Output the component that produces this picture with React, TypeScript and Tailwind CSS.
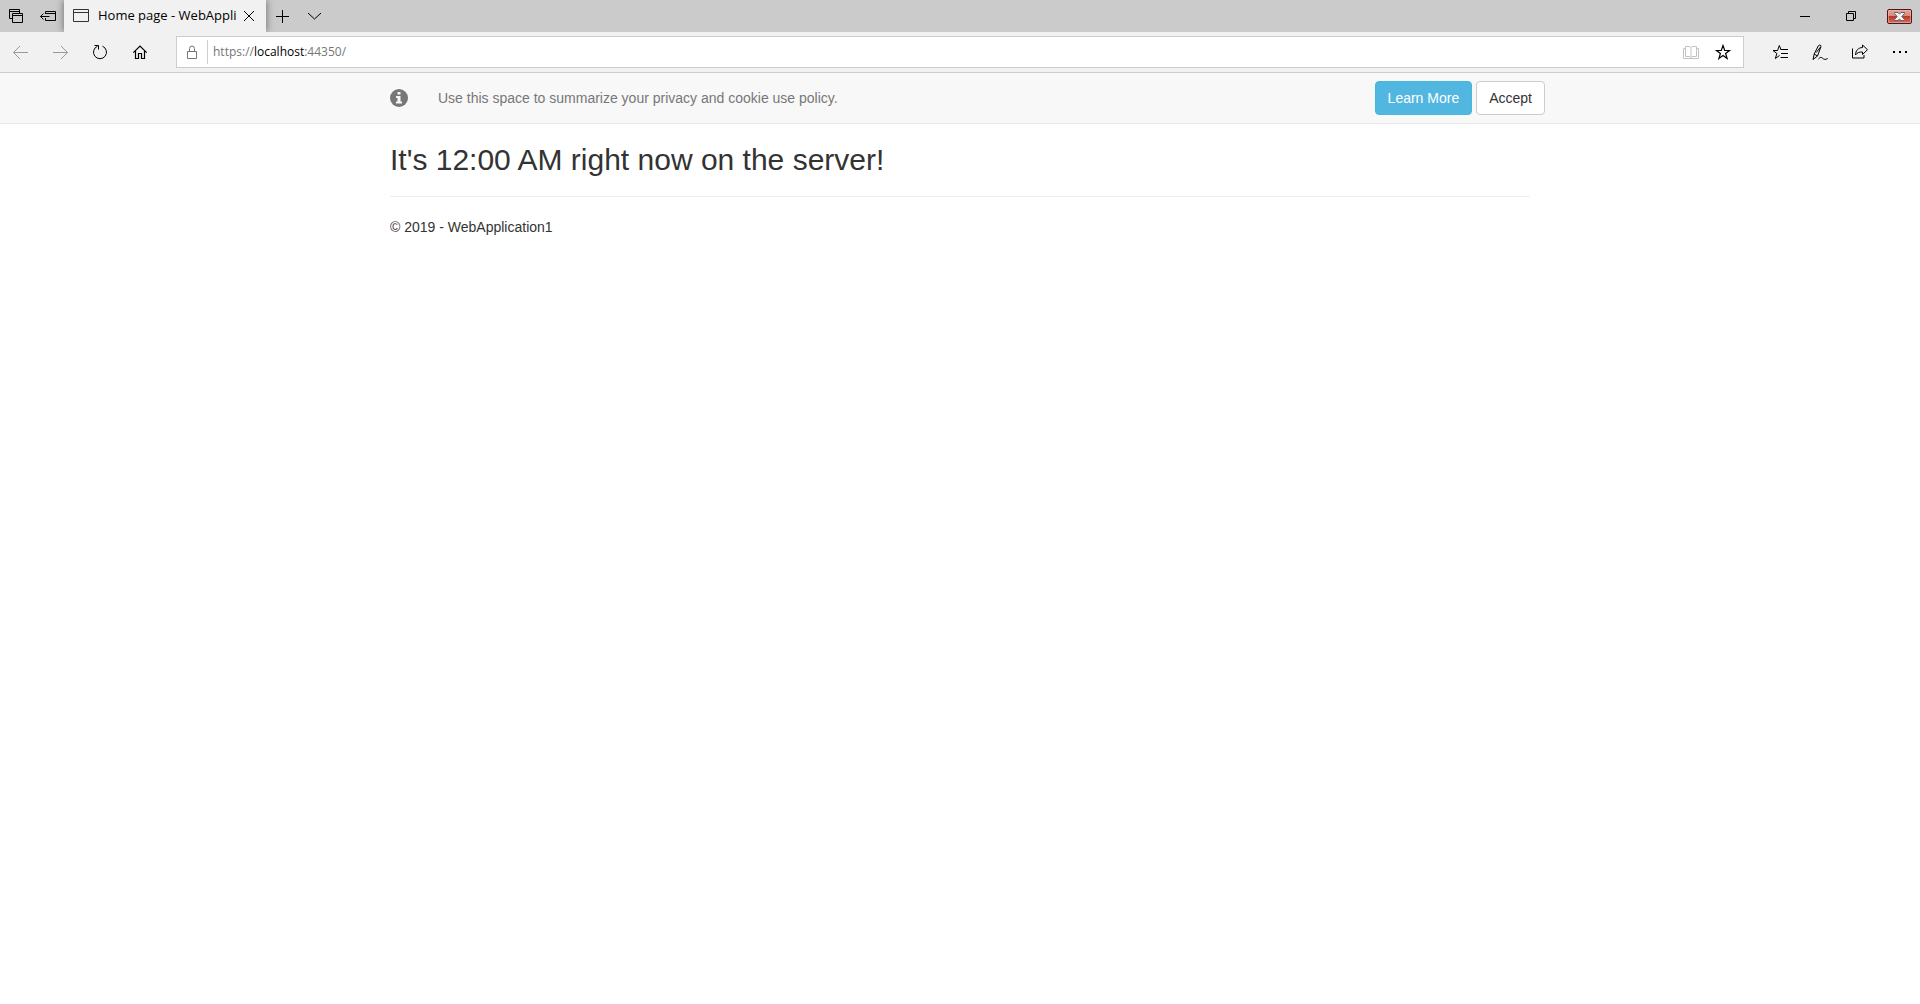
import { useState, type ReactNode } from "react";

function Icon({ children, className = "" }: { children: ReactNode; className?: string }) {
  return (
    <svg
      aria-hidden="true"
      viewBox="0 0 16 16"
      className={`h-4 w-4 shrink-0 overflow-visible ${className}`}
      fill="none"
      stroke="currentColor"
      strokeWidth="1"
    >
      {children}
    </svg>
  );
}

function BarButton({ label, width = "w-10", children }: { label: string; width?: string; children: ReactNode }) {
  return (
    <button type="button" aria-label={label} className={`flex h-full shrink-0 items-center justify-center ${width}`}>
      {children}
    </button>
  );
}

function TabStrip() {
  return (
    <div className="flex h-8 items-stretch overflow-hidden bg-[#cbcbcb] text-black">
      <BarButton label="Tabs you've set aside" width="w-8">
        <Icon>
          <path d="M4 10.5H1.5v-9h10V5M1.5 3.5h10M4.500 5.500h10v9h-10zM4.500 7.500h10" />
        </Icon>
      </BarButton>
      <BarButton label="Set these tabs aside" width="w-8">
        <Icon>
          <path d="M5.500 6V3.500h10v9h-10V10M5.500 5.500h10M.500 8.500h9M3.500 5.500l-3 3 3 3" />
        </Icon>
      </BarButton>
      <div className="relative flex w-[202px] shrink-0 items-center bg-[#f1f1f1] pl-2 shadow-[0_0_8px_rgba(0,0,0,0.5)]">
        <Icon className="text-[#333]">
          <path d="M1.500 1.500h15v12h-15zM1.500 4.500h15" />
        </Icon>
        <span className="ml-[10px] whitespace-nowrap text-[13px]">Home page - WebAppli</span>
        <button type="button" aria-label="Close tab" className="ml-auto mr-[9px] flex h-full items-center">
          <Icon>
            <path d="m3 3 10 10M13 3 3 13" />
          </Icon>
        </button>
      </div>
      <BarButton label="New tab" width="w-8">
        <Icon>
          <path d="M8.500 2v13M2 8.500h13" />
        </Icon>
      </BarButton>
      <BarButton label="Show tab previews" width="w-8">
        <Icon>
          <path d="m2 5 6.500 6L15 5" />
        </Icon>
      </BarButton>
      <div className="ml-auto flex">
        <BarButton label="Minimize" width="w-12">
          <Icon>
            <path d="M3 8.500h10" />
          </Icon>
        </BarButton>
        <BarButton label="Restore" width="w-11">
          <Icon>
            <path d="M3.500 5.500h7v7h-7zM5.500 5.500v-2h7v7h-2" />
          </Icon>
        </BarButton>
        <button type="button" aria-label="Close window" className="ml-[14px] mr-2 flex items-center">
          <svg aria-hidden="true" viewBox="0 0 25 15" className="h-[15px] w-[25px]">
            <defs>
              <linearGradient id="close-fill" x1="0" y1="0" x2="0" y2="1">
                <stop offset="0" stopColor="#e8a89c" />
                <stop offset="0.480" stopColor="#d98577" />
                <stop offset="0.500" stopColor="#b83a25" />
                <stop offset="1" stopColor="#d9705c" />
              </linearGradient>
            </defs>
            <rect x="0.500" y="0.500" width="24" height="14" rx="1.500" fill="url(#close-fill)" stroke="#4a1524" />
            <rect x="1.500" y="1.500" width="22" height="12" rx="0.500" fill="none" stroke="#f0b8ac" strokeOpacity="0.600" />
            <path
              d="M7.500 3.500h3.500l1.500 1.600L14 3.500h3.500v1L14.800 7.500l2.700 3v1H14l-1.500-1.600L11 11.500H7.500v-1l2.700-3-2.700-3z"
              fill="#f4f4f4"
              stroke="#5b6273"
            />
          </svg>
        </button>
      </div>
    </div>
  );
}

const STAR = "M8 1.500l1.700 5h4.800l-3.900 3 1.500 5L8 11.500l-4.100 3 1.500-5-3.900-3h4.800z";

function AddressBar() {
  const [editing, setEditing] = useState(false);
  const [url, setUrl] = useState("https://localhost:44350/");
  return (
    <div className="ml-4 flex h-8 flex-1 items-center border border-[#cdcdcd] bg-white">
      <Icon className="ml-[7px] text-[#777]">
        <path d="M3.500 7.500h9v7h-9zM5.500 7.500V4.500a2.500 2.500 0 0 1 5 0v3" />
      </Icon>
      <span className="ml-[7px] h-6 w-px bg-[#cdcdcd]" />
      <div className="relative h-full flex-1">
        <input
          id="address"
          aria-label="Address"
          type="text"
          value={editing ? url : ""}
          onChange={(e) => setUrl(e.target.value)}
          onFocus={() => setEditing(true)}
          onBlur={() => setEditing(false)}
          className="h-full w-full bg-transparent pl-[5px] text-xs outline-none"
        />
        {!editing && (
          <label htmlFor="address" className="absolute inset-0 flex cursor-text items-center pl-[5px] text-xs text-[#767676]">
            https://<span className="text-black">localhost</span>:44350/
          </label>
        )}
      </div>
      <BarButton label="Reading view" width="w-6">
        <Icon className="text-[#c3c3c3]">
          <path d="M2.500 2.500H7l1 1 1-1h4.500v10H9l-1 1-1-1H2.500zM8 3.500v10M2.500 4.500h-2v10h15v-10h-2" />
        </Icon>
      </BarButton>
      <BarButton label="Add to favorites">
        <Icon className="text-black">
          <path d={STAR} strokeWidth="1.200" />
        </Icon>
      </BarButton>
    </div>
  );
}

function Toolbar() {
  return (
    <div className="flex h-[41px] items-center border-b border-[#cdcdcd] bg-[#f1f1f1] text-black">
      <BarButton label="Back">
        <Icon className="text-[#999]">
          <path d="M1.500 8.500H16M8 2 1.500 8.500 8 15" />
        </Icon>
      </BarButton>
      <BarButton label="Forward">
        <Icon className="text-[#999]">
          <path d="M1 8.500h14.500M9 2l6.500 6.500L9 15" />
        </Icon>
      </BarButton>
      <BarButton label="Refresh">
        <Icon>
          <path d="M10.500 2.200a6.500 6.500 0 1 1-5 0M2.500 1.500h4v4" />
        </Icon>
      </BarButton>
      <BarButton label="Home">
        <Icon>
          <path d="M1.300 8.700 8 2l6.700 6.700M3.500 7v7.500h3v-5h3v5h3V7" strokeWidth="1.200" />
        </Icon>
      </BarButton>
      <AddressBar />
      <div className="ml-4 flex">
        <BarButton label="Favorites">
          <Icon>
            <path d="M7.500 11.500 3.300 14.500l1.600-5L1 6.500h4.600l1.700-5L9 5.500M8.500 5.500H16M9 9.500h7M8.500 13.500H16" />
          </Icon>
        </BarButton>
        <BarButton label="Add notes">
          <Icon>
            <path d="M1 15.500 2.200 10 6.300 1.800C7 .500 9.500 1 8.900 2.800L5.500 12 1 15.500M2.200 10l3.300 2M4.300 8.500 8.500 3M6.500 15c1.600-2 3-2 4.200-.700s2.800 1.500 5 .200" />
          </Icon>
        </BarButton>
        <BarButton label="Share">
          <Icon>
            <path d="M.500 4.500v9.500h11.500V11M3.500 11c.200-4.500 2.500-7.200 7-7.500V1l5 4.700-5 4.800V8c-3.500-.100-5.500.800-7 3z" />
          </Icon>
        </BarButton>
        <BarButton label="Settings and more">
          <Icon>
            <path d="M1 7h2v2H1zM7 7h2v2H7zM13 7h2v2h-2z" fill="currentColor" stroke="none" />
          </Icon>
        </BarButton>
      </div>
    </div>
  );
}

function CookieBanner() {
  return (
    <section aria-label="Cookie policy" className="border-b border-[#e7e7e7] bg-[#f8f8f8]">
      <div className="mx-auto flex h-[50px] max-w-[1170px] items-center pl-[15px]">
        <svg aria-hidden="true" viewBox="0 0 18 18" className="h-[18px] w-[18px]">
          <circle cx="9" cy="9" r="9" fill="#777" />
          <path d="M7.500 3h3v2.500h-3zM6 7h4.500v5.500H12v2H6v-2h1.500V9H6z" fill="#f8f8f8" />
        </svg>
        <p className="ml-[30px] text-sm text-[#777]">Use this space to summarize your privacy and cookie use policy.</p>
        <a
          href="#privacy"
          className="ml-auto rounded border border-[#46b8da] bg-[#52b7e0] px-3 py-[6px] text-sm text-white"
        >
          Learn More
        </a>
        <button type="button" className="ml-1 rounded border border-[#ccc] bg-white px-3 py-[6px] text-sm text-[#333]">
          Accept
        </button>
      </div>
    </section>
  );
}

export default function App() {
  return (
    <div className="min-h-screen bg-white">
      <header className="font-['Open_Sans',sans-serif]">
        <TabStrip />
        <Toolbar />
      </header>
      <div className="font-['Liberation_Sans',Arial,sans-serif] text-[#333]">
        <CookieBanner />
        <main className="mx-auto max-w-[1170px] px-[15px]">
          <h2 className="mt-[19px] text-[30px] leading-[33px]">It's 12:00 AM right now on the server!</h2>
          <hr className="my-5 border-[#eee]" />
          <footer>
            <p className="text-sm">© 2019 - WebApplication1</p>
          </footer>
        </main>
      </div>
    </div>
  );
}
